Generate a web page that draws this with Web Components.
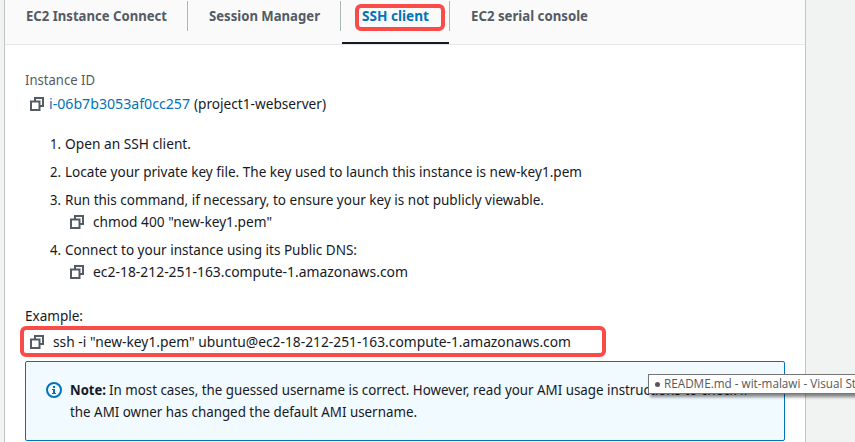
<!DOCTYPE html>
<html lang="en"><head><meta charset="utf-8"><title>Connect to instance</title>
<style>
html,body{margin:0;height:100%;overflow:hidden;background:#f1f3f3}
body{font:14px/22px "Noto Sans","Open Sans",sans-serif;color:#16191f}
</style></head><body>
<connect-page></connect-page>
<script>
// A single line of text condensed to the width given in "w".
class FitText extends HTMLElement{
  connectedCallback(){
    this.attachShadow({mode:'open'}).innerHTML=`<style>:host{display:inline-block;white-space:nowrap;vertical-align:top;flex:none}
    span{display:inline-block;transform-origin:0 50%;white-space:pre}</style><span><slot></slot></span>`;
    const s=this.shadowRoot.querySelector('span'),w=+this.getAttribute('w');
    s.style.transform=`scaleX(${w/s.getBoundingClientRect().width})`;
    this.style.width=w+'px';
  }
}
class CopyIcon extends HTMLElement{
  constructor(){super();this.attachShadow({mode:'open'}).innerHTML=`<style>:host{display:block;flex:none;width:14px;height:14px}svg{display:block}</style>
  <svg width="14" height="14" fill="none" stroke="#545b64" stroke-width="2"><path d="M1 4.5H9.5V13H1ZM5 4V1H13V9H10"/></svg>`}
}
class InfoIcon extends HTMLElement{
  constructor(){super();this.attachShadow({mode:'open'}).innerHTML=`<style>:host{display:block;flex:none;width:16px;height:16px}svg{display:block}</style>
  <svg width="16" height="16" fill="none" stroke="#0073bb"><circle cx="8" cy="8" r="7" stroke-width="2"/><path d="M7 4h2v2H7zM6 7h3v4h1v1H6v-1h1V8H6z" fill="#0073bb" stroke="none"/></svg>`}
}
class TabItem extends HTMLElement{
  constructor(){super();this.attachShadow({mode:'open'}).innerHTML=`<style>
  :host{display:block;box-sizing:border-box;flex:none;height:44px;color:#545b64;font-weight:700;position:relative}
  .l{height:30px;margin-top:1px;padding:4px 0 0 21px;box-sizing:border-box;border-right:1px solid #aab7b8}
  :host([last]) .l{border:0}
  :host([active]){color:#0073bb}
  :host([active])::after{content:"";position:absolute;left:1px;right:1px;bottom:0;height:2px;background:#16191f}
  :host([active])::before{content:"";position:absolute;left:14px;top:4px;width:90px;height:27px;box-sizing:border-box;border:4px solid #f94b48;border-radius:6px}
  </style><div class="l"><slot></slot></div>`}
}
class CopyRow extends HTMLElement{
  constructor(){super();this.attachShadow({mode:'open'}).innerHTML=`<style>
  :host{display:flex;align-items:center;height:22px;padding-left:5px;gap:var(--gap,9px)}
  </style><copy-icon></copy-icon><div><slot></slot></div>`}
}
class StepItem extends HTMLElement{
  constructor(){super();this.attachShadow({mode:'open'}).innerHTML=`<style>
  :host{display:grid;grid-template-columns:15px 1fr;padding-left:25px;margin-bottom:6px}
  .b{grid-column:2}</style><fit-text w="11">${this.getAttribute('n')}.</fit-text><div class="b"><slot></slot></div>`}
}
class NoteBox extends HTMLElement{
  constructor(){super();this.attachShadow({mode:'open'}).innerHTML=`<style>
  :host{display:flex;box-sizing:border-box;width:760px;height:80px;border:1px solid #0073bb;border-radius:2px;background:#f1faff;padding:17px 20px;gap:8px}
  info-icon{margin-top:3px}</style><info-icon></info-icon><div><slot></slot></div>`}
}
class WindowTip extends HTMLElement{
  constructor(){super();this.attachShadow({mode:'open'}).innerHTML=`<style>
  :host{position:absolute;left:648px;top:374px;width:230px;height:20px;box-sizing:border-box;border:1px solid #767676;background:#fff;color:#575757;font:12px/18px "Open Sans","Noto Sans",sans-serif;padding-left:6px;box-shadow:2px 3px 3px #0007;display:flex;align-items:center;gap:4px}
  i{width:5px;height:5px;border-radius:50%;background:#575757;flex:none}</style><i></i><slot></slot>`}
}
class ConnectPage extends HTMLElement{
  constructor(){super();this.attachShadow({mode:'open'}).innerHTML=`<style>
  :host{display:block;height:442px;overflow:hidden;position:relative}
  main{margin-left:4px;width:802px;height:442px;box-sizing:border-box;border:solid #c0c5c5;border-width:0 1px;background:#fff}
  nav{display:flex;height:45px;box-sizing:border-box;border-bottom:1px solid #e4e7e7;background:#fafafa}
  section{padding:24px 20px 0}
  .muted{color:#545b64}.id{--gap:5px;margin-top:2px}.link{color:#0073bb}
  .steps{padding-top:18px}.ex{margin-top:22px}
  .cmd{box-sizing:border-box;width:586px;height:31px;border:4px solid #f94b48;border-radius:6px;margin:-1px 0 4px -5px;padding:1px 0 0 1px;--gap:9px}
  </style><main><nav>
  <tab-item style="width:183px"><fit-text w="141">EC2 Instance Connect</fit-text></tab-item>
  <tab-item style="width:153px"><fit-text w="111">Session Manager</fit-text></tab-item>
  <tab-item active style="width:109px"><fit-text w="67">SSH client</fit-text></tab-item>
  <tab-item last style="width:160px"><fit-text w="117">EC2 serial console</fit-text></tab-item>
  </nav><section>
  <div class="muted"><fit-text w="70">Instance ID</fit-text></div>
  <copy-row class="id"><fit-text class="link" w="141">i-06b7b3053af0cc257</fit-text><fit-text w="132" style="margin-left:4px">(project1-webserver)</fit-text></copy-row>
  <div class="steps">
  <step-item n="1"><fit-text w="126">Open an SSH client.</fit-text></step-item>
  <step-item n="2"><fit-text w="517">Locate your private key file. The key used to launch this instance is new-key1.pem</fit-text></step-item>
  <step-item n="3"><fit-text w="479">Run this command, if necessary, to ensure your key is not publicly viewable.</fit-text><copy-row><fit-text w="179">chmod 400 "new-key1.pem"</fit-text></copy-row></step-item>
  <step-item n="4"><fit-text w="292">Connect to your instance using its Public DNS:</fit-text><copy-row><fit-text w="315">ec2-18-212-251-163.compute-1.amazonaws.com</fit-text></copy-row></step-item>
  </div>
  <div class="ex"><fit-text w="58">Example:</fit-text></div>
  <div class="cmd"><copy-row><fit-text w="518">ssh -i "new-key1.pem" ubuntu@ec2-18-212-251-163.compute-1.amazonaws.com</fit-text></copy-row></div>
  <note-box><fit-text w="36" style="font-weight:700">Note:</fit-text><fit-text w="639" style="margin-left:3px">In most cases, the guessed username is correct. However, read your AMI usage instructions to check if</fit-text><br><fit-text w="347">the AMI owner has changed the default AMI username.</fit-text></note-box>
  </section></main>
  <window-tip><fit-text w="192">README.md - wit-malawi - Visual St</fit-text></window-tip>`}
}
const parts={'copy-icon':CopyIcon,'info-icon':InfoIcon,'tab-item':TabItem,'copy-row':CopyRow,'step-item':StepItem,'note-box':NoteBox,'window-tip':WindowTip,'connect-page':ConnectPage,'fit-text':FitText};
for(const [n,c] of Object.entries(parts))customElements.define(n,c);
</script></body></html>
